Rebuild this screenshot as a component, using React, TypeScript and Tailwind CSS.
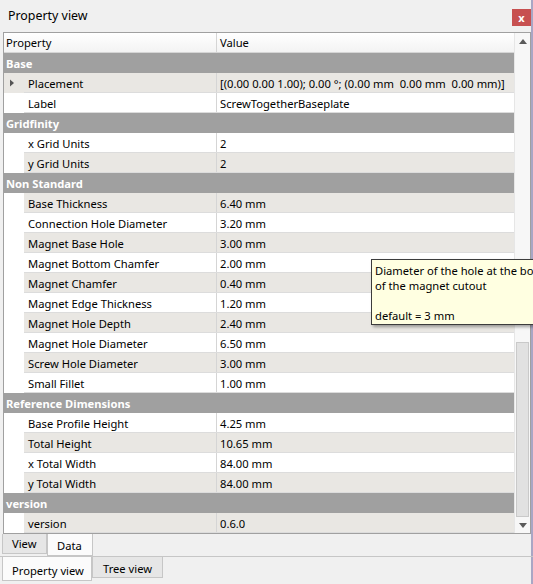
import React from "react";

type Row =
  | { kind: "group"; label: string }
  | { kind: "item"; label: string; value: string; expand?: boolean };

const ROWS: Row[] = [
  { kind: "group", label: "Base" },
  { kind: "item", label: "Placement", value: "[(0.00 0.00 1.00); 0.00 °; (0.00 mm  0.00 mm  0.00 mm)]", expand: true },
  { kind: "item", label: "Label", value: "ScrewTogetherBaseplate" },
  { kind: "group", label: "Gridfinity" },
  { kind: "item", label: "x Grid Units", value: "2" },
  { kind: "item", label: "y Grid Units", value: "2" },
  { kind: "group", label: "Non Standard" },
  { kind: "item", label: "Base Thickness", value: "6.40 mm" },
  { kind: "item", label: "Connection Hole Diameter", value: "3.20 mm" },
  { kind: "item", label: "Magnet Base Hole", value: "3.00 mm" },
  { kind: "item", label: "Magnet Bottom Chamfer", value: "2.00 mm" },
  { kind: "item", label: "Magnet Chamfer", value: "0.40 mm" },
  { kind: "item", label: "Magnet Edge Thickness", value: "1.20 mm" },
  { kind: "item", label: "Magnet Hole Depth", value: "2.40 mm" },
  { kind: "item", label: "Magnet Hole Diameter", value: "6.50 mm" },
  { kind: "item", label: "Screw Hole Diameter", value: "3.00 mm" },
  { kind: "item", label: "Small Fillet", value: "1.00 mm" },
  { kind: "group", label: "Reference Dimensions" },
  { kind: "item", label: "Base Profile Height", value: "4.25 mm" },
  { kind: "item", label: "Total Height", value: "10.65 mm" },
  { kind: "item", label: "x Total Width", value: "84.00 mm" },
  { kind: "item", label: "y Total Width", value: "84.00 mm" },
  { kind: "group", label: "version" },
  { kind: "item", label: "version", value: "0.6.0" },
];

export default function App() {
  return (
    <div
      className="relative w-[533px] h-[584px] overflow-hidden bg-[#f0f0f0] text-[11.2px] text-black shadow-[inset_-2px_0_0_#a9a6c4]"
      style={{ fontFamily: '"Noto Sans", sans-serif' }}
    >
      {/* title bar */}
      <div className="h-[32px] flex items-start justify-between pl-[8px]">
        <span className="mt-[7px] text-[12.4px]">Property view</span>
        <button className="mt-[9px] mr-[2px] w-[19px] h-[17px] bg-[#c75050] text-white text-[11px] font-bold leading-[15px]">
          x
        </button>
      </div>

      {/* property table */}
      <div className="ml-[3px] w-[528px] h-[502px] border border-[#a0a0a0] bg-white flex">
        <div className="flex-1 flex flex-col">
          <div className="h-[20px] flex bg-gradient-to-b from-white to-[#f3f3f3] border-b border-[#d5d5d5]">
            <div className="w-[213px] pl-[2px] border-r border-[#d5d5d5] leading-[20px]">Property</div>
            <div className="flex-1 pl-[3px] leading-[20px]">Value</div>
          </div>
          {ROWS.map((r, i) =>
            r.kind === "group" ? (
              <div key={i} className="h-[20px] bg-[#a0a0a0] text-white font-bold pl-[2px] leading-[21px]">
                {r.label}
              </div>
            ) : (
              <div key={i} className="h-[20px] flex">
                <div className={`w-[20px] flex items-center justify-center ${r.expand ? "bg-[#e9e7e3]" : "bg-white"}`}>
                  {r.expand && (
                    <svg width="6" height="8" viewBox="0 0 6 8" className="ml-[-4px]">
                      <path d="M1 0.5 L5 4 L1 7.5 Z" fill="#555" />
                    </svg>
                  )}
                </div>
                <div
                  className={`flex-1 flex border-b border-[#dcdcdc] ${i % 2 === 1 ? "bg-[#e9e7e3]" : "bg-white"}`}
                >
                  <div className="w-[193px] pl-[4px] border-r border-[#d5d5d5] leading-[21px] whitespace-nowrap">
                    {r.label}
                  </div>
                  <div className="flex-1 pl-[3px] leading-[21px] whitespace-pre overflow-hidden">{r.value}</div>
                </div>
              </div>
            )
          )}
        </div>

        {/* scrollbar */}
        <div className="w-[16px] flex flex-col bg-[#f7f7f7] border-l border-[#e6e6e6]">
          <div className="h-[16px] flex items-center justify-center">
            <svg width="8" height="5" viewBox="0 0 8 5">
              <path d="M0 5 L4 0 L8 5 Z" fill="#5a5a5a" />
            </svg>
          </div>
          <div className="h-[293px]" />
          <div className="h-[175px] mx-[1px] bg-[#e1e1e1] border border-[#c9c9c9]" />
          <div className="flex-1 flex items-center justify-center">
            <svg width="8" height="5" viewBox="0 0 8 5">
              <path d="M0 0 L8 0 L4 5 Z" fill="#5a5a5a" />
            </svg>
          </div>
        </div>
      </div>

      {/* view / data tabs */}
      <div className="h-[22px] flex items-start pl-[2px]">
        <div className="h-[20px] w-[45px] bg-[#e6e6e6] border border-t-0 border-[#c6c6c6] pl-[9px] leading-[20px]">
          View
        </div>
        <div className="h-[22px] w-[46px] bg-[#fbfbfb] border border-t-0 border-[#c6c6c6] pl-[9px] leading-[24px]">
          Data
        </div>
      </div>

      {/* bottom dock tabs */}
      <div className="border-t border-[#c6c6c6] h-[28px] flex items-start pl-[2px]">
        <div className="h-[24px] w-[90px] bg-[#fbfbfb] border border-t-0 border-[#c6c6c6] pl-[9px] leading-[27px]">
          Property view
        </div>
        <div className="h-[21px] w-[71px] bg-[#e6e6e6] border border-t-0 border-[#c6c6c6] pl-[10px] leading-[23px]">
          Tree view
        </div>
      </div>

      {/* tooltip */}
      <div className="absolute left-[371px] top-[259px] w-[190px] h-[66px] bg-[#ffffe1] border border-[#3c3c3c] shadow-[2px_2px_3px_rgba(0,0,0,0.35)] px-[3px] pt-[2px] leading-[15px] whitespace-nowrap">
        <div className="mt-[1px]">Diameter of the hole at the bottom</div>
        <div>of the magnet cutout</div>
        <div>&nbsp;</div>
        <div>default = 3 mm</div>
      </div>
    </div>
  );
}
